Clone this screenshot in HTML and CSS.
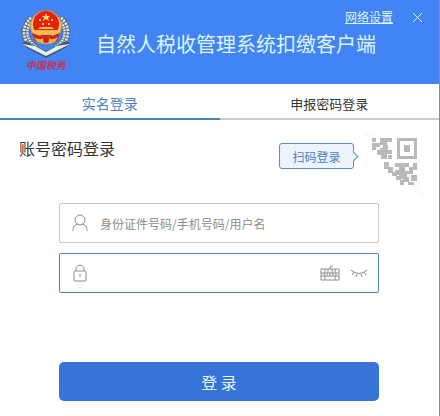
FILE: index.html
```html
<!DOCTYPE html>
<html lang="zh-CN">
<head>
  <meta charset="UTF-8" />
  <meta name="viewport" content="width=device-width, initial-scale=1" />
  <title>自然人税收管理系统扣缴客户端</title>
  <link rel="stylesheet" href="styles.css">
</head>
<body>
  <header class="header">
    <div class="logo">
      <svg width="50" height="50" viewBox="0 0 50 50" aria-hidden="true">
        <!-- wheat ears -->
        <path d="M11 11C1 20 3 34 16 41M39 11C49 20 47 34 34 41" fill="none" stroke="#526c88" stroke-width="8" />
        <path d="M11 11C1 20 3 34 16 41M39 11C49 20 47 34 34 41" fill="none" stroke="#dfe8e4" stroke-width="6" stroke-dasharray="2 1" />
        <path d="M11 11C1 20 3 34 16 41M39 11C49 20 47 34 34 41" fill="none" stroke="#667c88" stroke-width="1" />
        <!-- book -->
        <path d="M1 35L5 33L25 43L45 33L49 35L44 40L25 50L6 40Z" fill="#46586c" />
        <path d="M1 36L14 38L25 44L36 38L49 36L25 48Z" fill="#e6efec" />
        <!-- emblem -->
        <circle cx="25" cy="18" r="16" fill="#b98b3b" />
        <circle cx="25" cy="18" r="15" fill="#f0c36a" />
        <circle cx="25" cy="16" r="13" fill="#e5200f" />
        <path d="M11 25Q25 32 39 25L36 33Q25 39 14 33Z" fill="#c92413" />
        <path d="M14 22H36V24L33 27H17L14 24ZM19 19H31L33 21H17Z" fill="#f6ba4b" />
        <path d="M13 29Q19 33 22 30H28Q31 33 37 29L34 34Q25 38 16 34Z" fill="#eeb347" />
        <circle cx="25" cy="32" r="3" fill="#c92413" />
        <path d="M25 5L26 8H29L27 10L28 13L25 11L22 13L23 10L21 8H24Z" fill="#ffdc68" />
        <path d="M18 11h2v2h-2zM30 11h2v2h-2zM21 15h2v2h-2zM27 15h2v2h-2z" fill="#ffd25c" />
      </svg>
      <span class="logo-text">中国税务</span>
    </div>
    <h1>自然人税收管理系统扣缴客户端</h1>
    <div class="window-tools">
      <a href="#">网络设置</a>
      <button type="button" class="close" aria-label="关闭">
        <svg width="11" height="11" viewBox="0 0 11 11"><path d="M1 1L10 10M10 1L1 10" /></svg>
      </button>
    </div>
  </header>

  <nav class="tabs">
    <button type="button" class="tab active">实名登录</button>
    <button type="button" class="tab">申报密码登录</button>
  </nav>

  <main>
    <div class="login-head">
      <h2>账号密码登录</h2>
      <button type="button" class="scan-tip">扫码登录</button>
      <svg class="qr" width="60" height="66" viewBox="0 0 60 66" role="img" aria-label="二维码">
        <defs>
          <linearGradient id="fold" x1="0" y1="1" x2="1" y2="0">
            <stop offset="0.4" stop-color="#f3f3f3" />
            <stop offset="0.6" stop-color="#ffffff" />
          </linearGradient>
        </defs>
        <path d="M0 0H60V66Z" fill="url(#fold)" />
        <g fill="#b9b9b9">
          <path fill-rule="evenodd" d="M34 6H54V27H34ZM37 9V24H51V9Z" />
          <path d="M41 13h6v7h-6z" />
          <path d="M9 6h4v4h-4zM17 6h12v4h-5v3h-7zM9 11h8v4h-4v3h-4zM20 13h5v5h4v4h-9v-2h-3v-4h3zM14 18h6v5h-6zM18 22h6v5h-6zM25 23h4v4h-4z" />
          <path d="M21 30h5v5h4v6h-5v-4h-4zM32 31h14v4h-4v4h4v-4h4v-4h4v7h-4v4h-6v5h-8v-4h-4v-5h4v-3h-4zM29 40h5v4h-5zM33 44h5v4h-5zM40 45h6v5h-6zM48 43h6v6h-6zM37 48h4v5h-4zM45 50h6v3h-6z" />
        </g>
      </svg>
    </div>

    <form class="login-form">
      <div class="field">
        <svg width="18" height="18" viewBox="0 0 18 18" aria-hidden="true">
          <circle cx="9" cy="6" r="5" />
          <path d="M2 17C2 13 4 10 7 10M11 10C14 10 16 13 16 17" />
        </svg>
        <input type="text" aria-label="用户名" placeholder="身份证件号码/手机号码/用户名">
      </div>
      <div class="field focused">
        <svg width="18" height="18" viewBox="0 0 18 18" aria-hidden="true">
          <rect x="3" y="7" width="12" height="10" rx="1" />
          <path d="M5 7V5C5 0 13 0 13 5V7M9 10V13" />
        </svg>
        <input type="password" aria-label="密码">
        <button type="button" class="icon-button" aria-label="软键盘">
          <svg width="20" height="16" viewBox="0 0 20 16">
            <path d="M1 4H19V15H1ZM1 8H19M1 11H19M5 4V8M8 4V8M12 4V8M15 4V8M4 8V11M7 8V11M10 8V11M13 8V11M16 8V11M5 11V15M15 11V15M10 4V2L13 1" />
          </svg>
        </button>
        <button type="button" class="icon-button" aria-label="显示密码">
          <svg width="18" height="16" viewBox="0 0 18 16">
            <path d="M1 5Q9 12 17 5M4 7L2 10M7 9L6 12M11 9L12 12M14 7L16 10" />
          </svg>
        </button>
      </div>
      <button type="submit" class="submit">登 录</button>
    </form>
  </main>
</body>
</html>
```

FILE: styles.css
```css
* {
  box-sizing: border-box;
}
body {
  margin: 0;
  min-height: 100vh;
  border-right: 1px solid #8c8c8c;
  background: #fff;
  color: #333;
  font-family: "Noto Sans CJK SC", sans-serif;
  font-size: 12px;
}
button,
input {
  margin: 0;
  padding: 0;
  border: 0;
  background: none;
  color: inherit;
  font: inherit;
}
button {
  cursor: pointer;
}
svg {
  display: block;
  flex: none;
}
h1,
h2 {
  margin: 0;
  font-weight: 400;
}

.header {
  position: relative;
  display: flex;
  align-items: center;
  height: 84px;
  padding: 0 20px 4px;
  background: #4384f5;
  color: #dcf5ff;
}
.logo {
  display: flex;
  flex-direction: column;
  align-items: center;
  width: 52px;
}
.logo-text {
  color: #c63252;
  font-size: 10px;
  font-style: italic;
  font-weight: bold;
  line-height: 14px;
}
h1 {
  margin: 8px 0 0 24px;
  font-size: 20px;
  line-height: 28px;
  white-space: nowrap;
}
.window-tools {
  position: absolute;
  top: 8px;
  right: 16px;
  display: flex;
  align-items: center;
  gap: 19px;
  line-height: 18px;
}
.window-tools a {
  color: inherit;
}
.close svg {
  fill: none;
  stroke: #dcf5ff;
}

.tabs {
  display: flex;
  height: 36px;
}
.tab {
  flex: 1;
  padding-top: 4px;
  border-bottom: 2px solid #c8ccd2;
  font-size: 13px;
}
.tab.active {
  border-color: #4a80b8;
  color: #4a80c4;
  font-size: 14px;
}

.login-head {
  display: flex;
  align-items: flex-start;
  padding: 12px 16px 0 19px;
}
h2 {
  margin-top: 4px;
  font-size: 16px;
  line-height: 24px;
}
.scan-tip {
  position: relative;
  width: 75px;
  height: 26px;
  margin: 11px 9px 0 auto;
  border: 1px solid #5b8dc0;
  border-radius: 3px;
  background: #edf4ff;
  color: #4a80c4;
}
.scan-tip::after {
  content: "";
  position: absolute;
  top: 9px;
  right: -4px;
  width: 6px;
  height: 6px;
  border-top: 1px solid #5b8dc0;
  border-right: 1px solid #5b8dc0;
  background: #edf4ff;
  transform: rotate(45deg);
}

.login-form {
  display: flex;
  flex-direction: column;
  gap: 10px;
  padding: 5px 60px 14px 59px;
}
.field {
  display: flex;
  align-items: center;
  height: 40px;
  padding: 0 10px 0 11px;
  border: 1px solid #c8c8c8;
  border-radius: 2px;
}
.field.focused {
  border-color: #4f82b0;
}
.field svg {
  fill: none;
  stroke: #8c8c8c;
}
.field input {
  flex: 1;
  min-width: 0;
  margin-left: 11px;
  outline: none;
}
.field input::placeholder {
  color: #8c8c8c;
  opacity: 1;
}
.icon-button {
  margin-left: 10px;
}
.submit {
  height: 39px;
  margin-top: 59px;
  border-radius: 5px;
  background: #3873da;
  color: #e4faff;
  font-size: 16px;
}
```
